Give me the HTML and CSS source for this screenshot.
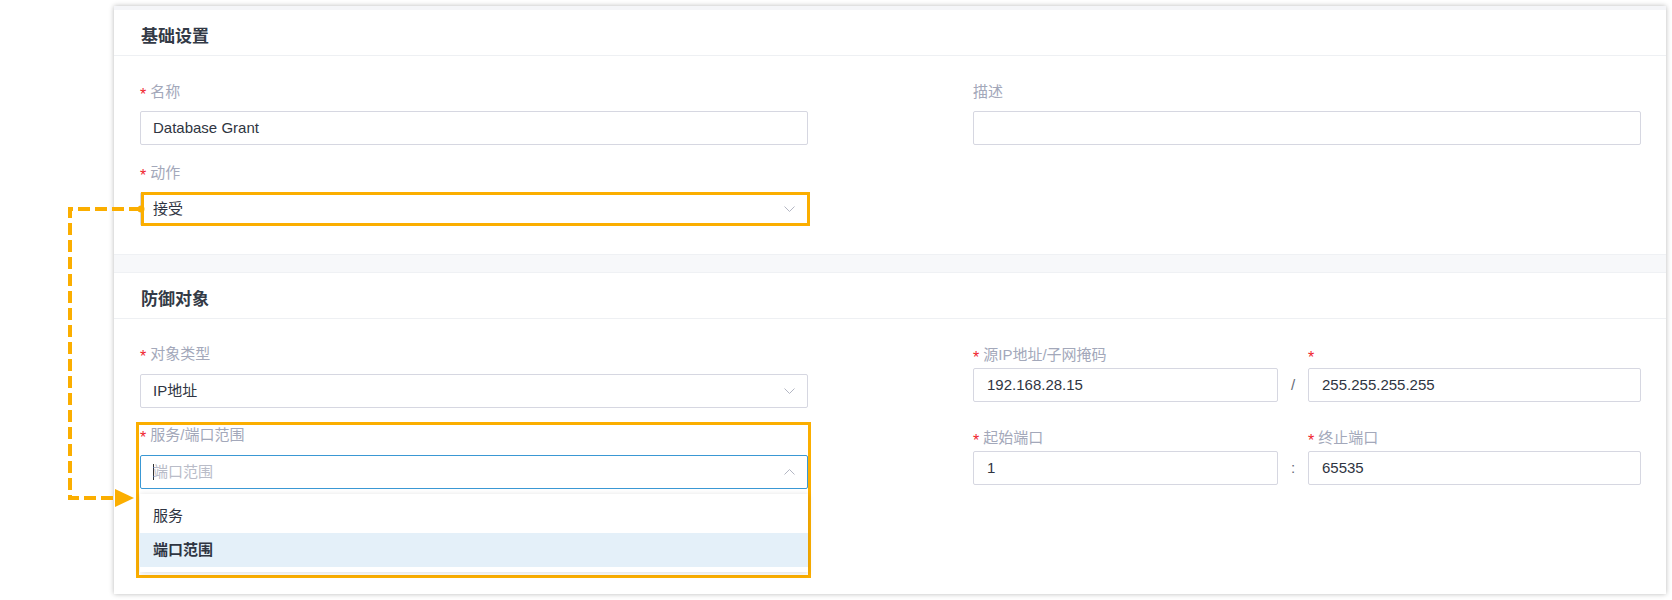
FILE: index.html
```html
<!DOCTYPE html>
<html lang="zh-CN">
<head>
<meta charset="utf-8">
<title>防御规则</title>
<link rel="stylesheet" href="styles.css">
</head>
<body>
<div class="card">
  <div class="sec-head">基础设置</div>
  <div class="sec-body sec-body-1">
    <div class="col">
      <div class="field">
        <div class="label"><span class="req">*</span>名称</div>
        <div class="input">Database Grant</div>
      </div>
      <div class="field">
        <div class="label"><span class="req">*</span>动作</div>
        <div class="input select">接受<svg class="chev" width="11" height="6" viewBox="0 0 11 6"><polyline points="0.5,0.5 5.5,5.5 10.5,0.5"/></svg></div>
      </div>
    </div>
    <div class="col">
      <div class="field">
        <div class="label">描述</div>
        <div class="input"></div>
      </div>
    </div>
  </div>
  <div class="sep"></div>
  <div class="sec-head">防御对象</div>
  <div class="sec-body sec-body-2">
    <div class="col col-left2">
      <div class="field">
        <div class="label"><span class="req">*</span>对象类型</div>
        <div class="input select">IP地址<svg class="chev" width="11" height="6" viewBox="0 0 11 6"><polyline points="0.5,0.5 5.5,5.5 10.5,0.5"/></svg></div>
      </div>
      <div class="field">
        <div class="label"><span class="req">*</span>服务/端口范围</div>
        <div class="input select focus"><span class="caret"></span><span class="ph">端口范围</span><svg class="chev" width="11" height="6" viewBox="0 0 11 6"><polyline points="0.5,5.5 5.5,0.5 10.5,5.5"/></svg>
          <div class="dropdown">
            <div class="opt">服务</div>
            <div class="opt active">端口范围</div>
          </div>
        </div>
      </div>
    </div>
    <div class="col col-right">
      <div class="pair">
        <div class="field">
          <div class="label"><span class="req">*</span>源IP地址/子网掩码</div>
          <div class="input">192.168.28.15</div>
        </div>
        <div class="joiner">/</div>
        <div class="field">
          <div class="label"><span class="req">*</span></div>
          <div class="input">255.255.255.255</div>
        </div>
      </div>
      <div class="pair">
        <div class="field">
          <div class="label"><span class="req">*</span>起始端口</div>
          <div class="input">1</div>
        </div>
        <div class="joiner">:</div>
        <div class="field">
          <div class="label"><span class="req">*</span>终止端口</div>
          <div class="input">65535</div>
        </div>
      </div>
    </div>
  </div>
</div>

<svg class="annot" width="1672" height="600" viewBox="0 0 1672 600">
  <rect class="hl" x="142.5" y="193.5" width="666" height="31"/>
  <rect class="hl" x="137.5" y="423.5" width="672" height="153"/>
  <path class="conn" d="M141 209 H70 V498 H117"/>
  <circle class="dot" cx="141" cy="209" r="3.5"/>
  <polygon class="dot" points="115,489 134,498 115,507"/>
</svg>
</body>
</html>
```

FILE: styles.css
```css
html, body {
  margin: 0;
  padding: 0;
  background: #ffffff;
}

body {
  font-family: "Liberation Sans", "Noto Sans CJK SC", sans-serif;
  color: #2f3542;
  width: 1672px;
  height: 600px;
  position: relative;
  overflow: hidden;
}

.card {
  margin: 6px 0 0 114px;
  width: 1552px;
  height: 588px;
  box-sizing: border-box;
  background: #ffffff;
  border-top: 4px solid #f4f5f8;
  box-shadow: 0 0 5px rgba(0, 0, 0, 0.28);
}

.sec-head {
  height: 46px;
  box-sizing: border-box;
  border-bottom: 1px solid #eef0f3;
  padding: 16px 0 0 27px;
  font-size: 17px;
  line-height: 22px;
  font-weight: bold;
  color: #333a46;
}

.sec-body {
  display: grid;
  grid-template-columns: 668px 668px;
  column-gap: 165px;
  padding-left: 26px;
  box-sizing: border-box;
}

.sec-body-1 {
  height: 198px;
  padding-top: 26px;
}

.sec-body-2 {
  padding-top: 25px;
}

.col {
  display: flex;
  flex-direction: column;
  gap: 18px;
}

.field {
  display: flex;
  flex-direction: column;
}

.label {
  height: 20px;
  line-height: 20px;
  font-size: 15px;
  color: #a3a8ba;
  margin-bottom: 9px;
  white-space: nowrap;
}

.col-left2 .label {
  margin-bottom: 10px;
}

.col-left2 {
  gap: 17px;
}

.req {
  display: inline-block;
  color: #f0252c;
  font-size: 16px;
  margin-right: 4px;
  position: relative;
  top: 3px;
}

.input {
  height: 34px;
  box-sizing: border-box;
  border: 1px solid #d6d7e1;
  border-radius: 2px;
  padding-left: 12px;
  font-size: 15px;
  line-height: 32px;
  color: #2f3542;
  display: flex;
  align-items: center;
  position: relative;
}

.select .chev {
  position: absolute;
  right: 12px;
  top: 13px;
}

.chev polyline {
  fill: none;
  stroke: #b3b6c3;
  stroke-width: 1;
}

.focus {
  border-color: #3a98d4;
}

.caret {
  width: 1px;
  height: 16px;
  background: #333;
  margin-right: -1px;
}

.ph {
  color: #b9bcc8;
}

.dropdown {
  position: absolute;
  left: -1px;
  right: -1px;
  top: 38px;
  background: #ffffff;
  padding: 5px 0;
  box-shadow: 0 1px 6px rgba(0, 0, 0, 0.14);
  z-index: 2;
}

.opt {
  height: 34px;
  line-height: 34px;
  padding-left: 13px;
  font-size: 15px;
  color: #2f3542;
}

.opt.active {
  background: #e4f0f9;
  font-weight: bold;
}

.sep {
  height: 19px;
  box-sizing: border-box;
  background: #f7f8fa;
  border-top: 1px solid #eff1f4;
  border-bottom: 1px solid #eff1f4;
}

.col-right {
  padding-top: 1px;
  gap: 26px;
}

.col-right .label {
  margin-bottom: 3px;
}

.col-right .input {
  padding-left: 13px;
}

.pair {
  display: grid;
  grid-template-columns: 305px 30px 1fr;
}

.joiner {
  align-self: end;
  height: 34px;
  line-height: 34px;
  text-align: center;
  font-size: 15px;
  color: #666b78;
}

.annot {
  position: absolute;
  left: 0;
  top: 0;
  pointer-events: none;
}

.hl {
  fill: none;
  stroke: #fbae00;
  stroke-width: 3;
}

.conn {
  fill: none;
  stroke: #fbae00;
  stroke-width: 4;
  stroke-dasharray: 12 5;
}

.dot {
  fill: #fbae00;
}
```
